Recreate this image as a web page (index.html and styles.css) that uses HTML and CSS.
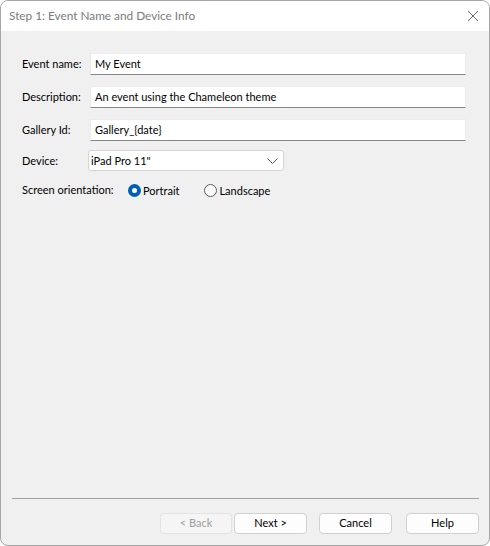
FILE: index.html
```html
<!DOCTYPE html>
<html>
<head>
<meta charset="utf-8">
<link rel="stylesheet" href="styles.css">
</head>
<body>
<div class="window">
  <div class="titlebar">
    <span class="title">Step 1: Event Name and Device Info</span>
    <svg class="close" width="12" height="12" viewBox="0 0 12 12"><path d="M1 1L11 11M11 1L1 11" stroke="#6a6a6a" stroke-width="1" fill="none"/></svg>
  </div>
  <div class="body">
    <div class="form">
      <div class="row">
        <label class="label">Event name:</label>
        <div class="input">My Event</div>
      </div>
      <div class="row">
        <label class="label">Description:</label>
        <div class="input">An event using the Chameleon theme</div>
      </div>
      <div class="row">
        <label class="label">Gallery Id:</label>
        <div class="input">Gallery_{date}</div>
      </div>
      <div class="row row-select">
        <label class="label">Device:</label>
        <div class="select">
          <span>iPad Pro 11"</span>
          <svg class="chev" width="11" height="6" viewBox="0 0 11 6"><path d="M0.5 0.5L5.5 5.5L10.5 0.5" stroke="#5a5a5a" stroke-width="1" fill="none"/></svg>
        </div>
      </div>
      <div class="row row-radio">
        <label class="label label-wide">Screen orientation:</label>
        <div class="radio">
          <span class="dot checked"></span><span>Portrait</span>
        </div>
        <div class="radio">
          <span class="dot"></span><span>Landscape</span>
        </div>
      </div>
    </div>
    <div class="footer">
      <div class="sep"></div>
      <div class="buttons">
        <div class="btn btn-back disabled">&lt; Back</div>
        <div class="btn btn-next">Next &gt;</div>
        <div class="btn btn-cancel">Cancel</div>
        <div class="btn btn-help">Help</div>
      </div>
    </div>
  </div>
</div>
</body>
</html>
```

FILE: styles.css
```css
* { box-sizing: border-box; }
html, body { margin: 0; padding: 0; background: #ffffff; }
body {
  font-family: Lato, "Noto Sans", sans-serif;
  font-size: 11px;
  color: #000000;
}
.window {
  width: 490px;
  height: 546px;
  border: 1px solid #a6a6a6;
  border-radius: 8px;
  overflow: hidden;
  display: flex;
  flex-direction: column;
  background: #f0f0f0;
}
.titlebar {
  height: 30px;
  flex: none;
  background: #ffffff;
  display: flex;
  align-items: center;
  justify-content: space-between;
  padding: 0 10px 2px 8px;
}
.title {
  color: #7b7b7b;
  font-size: 11.8px;
  white-space: nowrap;
}
.close { display: block; margin-top: 1px; }
.body {
  flex: 1;
  display: flex;
  flex-direction: column;
}
.form {
  flex: 1;
  padding: 22px 0 0 21px;
  display: flex;
  flex-direction: column;
}
.row {
  display: flex;
  align-items: center;
  height: 22px;
  margin-bottom: 11px;
}
.row-select { height: 21px; margin-top: -2px; margin-bottom: 0; }
.row-radio { margin-top: 8px; height: 22px; }
.label {
  width: 68px;
  flex: none;
  white-space: nowrap;
  padding-bottom: 1px;
}
.label-wide { width: 106px; }
.input {
  width: 376px;
  height: 22px;
  background: #ffffff;
  border: 1px solid #ececec;
  border-bottom: 1px solid #868686;
  padding: 0 4px 1px;
  line-height: 19px;
  white-space: nowrap;
}
.select {
  margin-left: -2px;
  width: 196px;
  height: 21px;
  background: #ffffff;
  border: 1px solid #d4d4d4;
  border-radius: 3px;
  display: flex;
  align-items: center;
  justify-content: space-between;
  padding: 0 4px 1px 2px;
  white-space: nowrap;
}
.chev { display: block; margin-right: 1px; margin-top: 1px; }
.radio {
  display: flex;
  align-items: center;
  margin-right: 25px;
  white-space: nowrap;
}
.dot {
  width: 13px;
  height: 13px;
  border-radius: 50%;
  border: 1px solid #5e5e5e;
  background: #fbfbfb;
  margin-right: 2px;
  flex: none;
}
.dot.checked {
  border: 4px solid #005fb8;
  background: #ffffff;
}
.footer {
  flex: none;
  padding: 0 10px 11px 11px;
}
.sep {
  height: 1px;
  background: #a0a0a0;
  margin-bottom: 14px;
}
.buttons {
  display: flex;
  justify-content: flex-end;
}
.btn {
  height: 21px;
  width: 73px;
  border: 1px solid #d0d0d0;
  border-radius: 4px;
  background: #fdfdfd;
  text-align: center;
  line-height: 18px;
  color: #000000;
}
.btn-back {
  width: 72px;
  margin-right: 2px;
  background: #f5f5f5;
  border-color: #e3e3e3;
  color: #9d9d9d;
}
.btn-next { margin-right: 12px; }
.btn-cancel { margin-right: 14px; }
```
